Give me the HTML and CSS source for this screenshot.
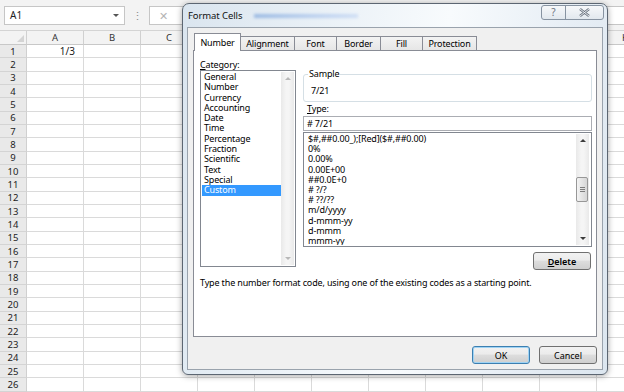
FILE: index.html
```html
<!DOCTYPE html>
<html lang="en">
<head>
  <meta charset="UTF-8" />
  <title>Format Cells</title>
  <link rel="stylesheet" href="styles.css">
</head>
<body>

  <div class="formula-bar">
    <div class="name-box"><span>A1</span><span class="nb-arrow"></span></div>
    <div class="fb-dots">⋮</div>
    <div class="fb-input"><span class="fb-x">✕</span></div>
  </div>

  <div class="sheet"></div>

  <div class="dialog">
    <div class="title-bar">
      <span class="title">Format Cells</span>
      <span class="title-blur"></span>
      <div class="caption-btns">
        <div class="cap-help">?</div>
        <div class="cap-close">
          <svg width="11" height="9" viewBox="0 0 11 9">
            <path d="M1 1 L10 8 M10 1 L1 8" stroke="#6b7480" stroke-width="2.4" fill="none"/>
            <path d="M1 1 L10 8 M10 1 L1 8" stroke="#f4f6f8" stroke-width="0.9" fill="none"/>
          </svg>
        </div>
      </div>
    </div>

    <div class="client">
      <div class="tabs">
        <div class="tab active" style="width:47px">Number</div>
        <div class="tab" style="width:54px">Alignment</div>
        <div class="tab" style="width:42px">Font</div>
        <div class="tab" style="width:44px">Border</div>
        <div class="tab" style="width:42px">Fill</div>
        <div class="tab" style="width:54px">Protection</div>
      </div>

      <div class="panel">
        <div class="panel-grid">
          <div class="left-col">
            <div class="label"><u>C</u>ategory:</div>
            <div class="listbox cat-list">
              <div class="items">
                <div>General</div>
                <div>Number</div>
                <div>Currency</div>
                <div>Accounting</div>
                <div>Date</div>
                <div>Time</div>
                <div>Percentage</div>
                <div>Fraction</div>
                <div>Scientific</div>
                <div>Text</div>
                <div>Special</div>
                <div class="selected">Custom</div>
              </div>
              <div class="vscroll disabled">
                <span class="arrow up"></span>
                <span class="arrow down"></span>
              </div>
            </div>
          </div>

          <div class="right-col">
            <fieldset class="sample">
              <legend>Sample</legend>
              <div class="sample-val">7/21</div>
            </fieldset>
            <div class="label"><u>T</u>ype:</div>
            <div class="type-input"># 7/21</div>
            <div class="listbox fmt-list">
              <div class="items" id="fmt-items"></div>
              <div class="vscroll">
                <span class="arrow up"></span>
                <span class="thumb"><i></i><i></i><i></i></span>
                <span class="arrow down"></span>
              </div>
            </div>
            <div class="btn-row">
              <button class="btn delete-btn"><u>D</u>elete</button>
            </div>
          </div>
        </div>
        <p class="hint">Type the number format code, using one of the existing codes as a starting point.</p>
      </div>

      <div class="footer">
        <button class="btn ok-btn">OK</button>
        <button class="btn">Cancel</button>
      </div>
    </div>
  </div>

  <script>
    const sheet = document.querySelector(".sheet")
    // columns D..J sit behind the dialog, so their letters are left out
    const letters = ["A", "B", "C", "", "", "", "", "", "", "", "K"]

    let html = '<div class="corner"><span></span></div>'
    for (const l of letters) {
      html += '<div class="col-head">' + l + '</div>'
    }
    for (let r = 1; r <= 27; r++) {
      html += '<div class="row-head">' + r + '</div>'
      for (let c = 0; c < letters.length; c++) {
        const val = (r === 1 && c === 0) ? "1/3" : ""
        html += '<div class="cell">' + val + '</div>'
      }
    }
    sheet.innerHTML = html

    const formats = [
      "$#,##0.00_);[Red]($#,##0.00)",
      "0%",
      "0.00%",
      "0.00E+00",
      "##0.0E+0",
      "# ?/?",
      "# ??/??",
      "m/d/yyyy",
      "d-mmm-yy",
      "d-mmm",
      "mmm-yy"
    ]
    const fmtItems = document.getElementById("fmt-items")
    formats.forEach((f) => {
      const d = document.createElement("div")
      d.innerText = f
      fmtItems.append(d)
    })
  </script>

</body>
</html>
```

FILE: styles.css
```css
* {
  margin: 0;
  padding: 0;
  box-sizing: border-box;
}

body {
  width: 624px;
  height: 392px;
  overflow: hidden;
  position: relative;
  background-color: #fff;
  font-family: "Noto Sans", sans-serif;
  color: #000;
}

/* ---- excel window ---- */

.formula-bar {
  height: 31px;
  background-color: #f3f3f3;
  border-bottom: 1px solid #d4d4d4;
  display: flex;
  align-items: center;
  padding-left: 4px;
}

.name-box {
  width: 121px;
  height: 19px;
  background-color: #fff;
  border: 1px solid #c6c6c6;
  display: flex;
  align-items: center;
  justify-content: space-between;
  padding: 0 5px 0 5px;
  font-size: 10px;
  color: #222;
}

.nb-arrow {
  width: 0;
  height: 0;
  border-left: 3px solid transparent;
  border-right: 3px solid transparent;
  border-top: 3px solid #555;
}

.fb-dots {
  width: 24px;
  text-align: center;
  color: #8c8c8c;
  font-size: 11px;
}

.fb-input {
  flex: 1;
  height: 19px;
  background-color: #fff;
  border: 1px solid #c6c6c6;
  border-right: none;
  padding-left: 9px;
  display: flex;
  align-items: center;
}

.fb-x {
  color: #b4b4b4;
  font-size: 11px;
}

.sheet {
  display: grid;
  grid-template-columns: 27px repeat(11, 57px);
  grid-template-rows: 14px repeat(27, 13.33px);
  font-size: 9.5px;
}

.corner,
.col-head,
.row-head {
  background-color: #f3f3f3;
  border-right: 1px solid #d0d0d0;
  border-bottom: 1px solid #c8c8c8;
  color: #333;
}

.corner {
  position: relative;
}

.corner span {
  position: absolute;
  right: 2px;
  bottom: 2px;
  width: 0;
  height: 0;
  border-left: 7px solid transparent;
  border-bottom: 7px solid #d4d4d4;
}

.col-head {
  display: flex;
  align-items: center;
  justify-content: center;
}

.row-head {
  background-color: #e9e9e9;
  border-bottom-color: #d4d4d4;
  display: flex;
  align-items: center;
  justify-content: center;
  color: #222;
}

.cell {
  border-right: 1px solid #dadada;
  border-bottom: 1px solid #dadada;
  text-align: right;
  padding-right: 8px;
  line-height: 12px;
  font-size: 10px;
  color: #222;
}

/* ---- dialog ---- */

.dialog {
  position: absolute;
  left: 182px;
  top: 3px;
  width: 426px;
  height: 372px;
  border: 1px solid #5c6672;
  border-radius: 7px 7px 6px 6px;
  background: linear-gradient(100deg, #dae5ef 0%, #edf3f8 35%, #f8fbfd 55%, #e7eef5 80%, #dce6ef 100%);
  box-shadow: 0 1px 6px rgba(0, 0, 0, 0.35);
  padding: 0 4px 4px 4px;
  display: flex;
  flex-direction: column;
}

.title-bar {
  height: 23px;
  display: flex;
  align-items: flex-start;
  padding-left: 1px;
  position: relative;
}

.title {
  font-size: 9.5px;
  margin-top: 5px;
  color: #111;
  letter-spacing: -0.1px;
}

.title-blur {
  width: 104px;
  height: 4px;
  margin: 10px 0 0 12px;
  background: linear-gradient(90deg, #7ea6dc, #a9c4ec 60%, #c3d6f3);
  filter: blur(1.5px);
  opacity: 0.7;
}

.caption-btns {
  margin-left: auto;
  margin-right: -1px;
  margin-top: 1px;
  display: flex;
  height: 15px;
  border: 1px solid #8793a1;
  border-radius: 3px;
  background: linear-gradient(#f6f8fa, #e2e8ee);
  overflow: hidden;
}

.cap-help {
  width: 24px;
  border-right: 1px solid #8793a1;
  text-align: center;
  font-size: 10px;
  line-height: 13px;
  color: #6b7480;
}

.cap-close {
  width: 37px;
  display: flex;
  align-items: center;
  justify-content: center;
}

.client {
  flex: 1;
  background-color: #f0f0f0;
  border: 1px solid #9aa3ad;
  padding: 5px 5px 0 5px;
  display: flex;
  flex-direction: column;
  font-size: 9px;
  letter-spacing: -0.15px;
}

.tabs {
  display: flex;
  align-items: flex-end;
  height: 17px;
  margin-left: 1px;
}

.tab {
  height: 14px;
  border: 1px solid #898c95;
  border-left: none;
  border-bottom: none;
  background: linear-gradient(#f3f3f3, #e6e6e6);
  text-align: center;
  font-size: 9px;
  line-height: 14px;
}

.tab.active {
  height: 18px;
  margin-bottom: -1px;
  border-left: 1px solid #898c95;
  background: #fff;
  position: relative;
  z-index: 1;
  line-height: 17px;
}

.panel {
  height: 287px;
  background-color: #fff;
  border: 1px solid #898c95;
  padding: 8px 0 0 6px;
}

.panel-grid {
  display: grid;
  grid-template-columns: 96px 289px;
  column-gap: 7px;
}

.label {
  height: 11px;
  line-height: 11px;
}

.listbox {
  border: 1px solid #828790;
  display: flex;
  padding: 1px;
}

.items {
  flex: 1;
  line-height: 10.3px;
  white-space: nowrap;
  overflow: hidden;
}

.cat-list {
  height: 197px;
}

.cat-list .items div {
  padding-left: 2px;
}

.cat-list .items .selected {
  background-color: #3399ff;
  color: #fff;
}

.vscroll {
  width: 13px;
  background: linear-gradient(90deg, #e9e9e9, #f5f5f5 40%, #f5f5f5 60%, #e9e9e9);
  display: flex;
  flex-direction: column;
  align-items: center;
  padding: 5px 0;
  position: relative;
}

.arrow {
  width: 0;
  height: 0;
  border-left: 3px solid transparent;
  border-right: 3px solid transparent;
}

.arrow.up {
  border-bottom: 3px solid #3c3c3c;
}

.arrow.down {
  border-top: 3px solid #3c3c3c;
  margin-top: auto;
}

.vscroll.disabled .arrow.up {
  border-bottom-color: #b8b8b8;
}

.vscroll.disabled .arrow.down {
  border-top-color: #b8b8b8;
}

.right-col {
  padding-top: 10px;
}

.sample {
  border: 1px solid #d5dfe5;
  border-radius: 3px;
  padding: 3px 8px 5px 7px;
  height: 33px;
}

.sample legend {
  padding: 0 1px;
  margin-left: -3px;
  line-height: 10px;
}

.sample-val {
  line-height: 10px;
  padding-top: 4px;
}

.right-col .label {
  margin-top: 1px;
  padding-left: 4px;
}

.type-input {
  margin-top: 2px;
  height: 15px;
  border: 1px solid #abadb3;
  padding-left: 3px;
  line-height: 13px;
}

.fmt-list {
  height: 115px;
  margin-top: 1px;
}

.fmt-list .items {
  line-height: 10.2px;
  padding-left: 3px;
}

.fmt-list .vscroll {
  margin-right: 1px;
}

.thumb {
  position: absolute;
  left: 0;
  top: 43px;
  width: 12px;
  height: 25px;
  border: 1px solid #979797;
  border-radius: 2px;
  background: linear-gradient(90deg, #f4f4f4, #e4e4e4 50%, #d6d6d6);
  display: flex;
  flex-direction: column;
  align-items: center;
  justify-content: center;
  gap: 1px;
}

.thumb i {
  width: 5px;
  height: 1px;
  background-color: #7d7d7d;
}

.btn-row {
  display: flex;
  justify-content: flex-end;
  padding-right: 1px;
  margin-top: 5px;
}

.btn {
  width: 58px;
  height: 18px;
  border: 1px solid #707070;
  border-radius: 3px;
  background: linear-gradient(#f2f2f2 0%, #ebebeb 45%, #dddddd 50%, #cfcfcf 100%);
  font-family: "Noto Sans", sans-serif;
  font-size: 9px;
  color: #000;
}

.delete-btn {
  font-weight: 600;
}

.hint {
  margin-top: 7px;
  line-height: 11px;
}

.footer {
  display: flex;
  justify-content: flex-end;
  gap: 9px;
  margin-top: 9px;
}

.ok-btn {
  border-color: #3c7fb1;
  box-shadow: inset 0 0 0 1px #9fd3f4;
}
```
